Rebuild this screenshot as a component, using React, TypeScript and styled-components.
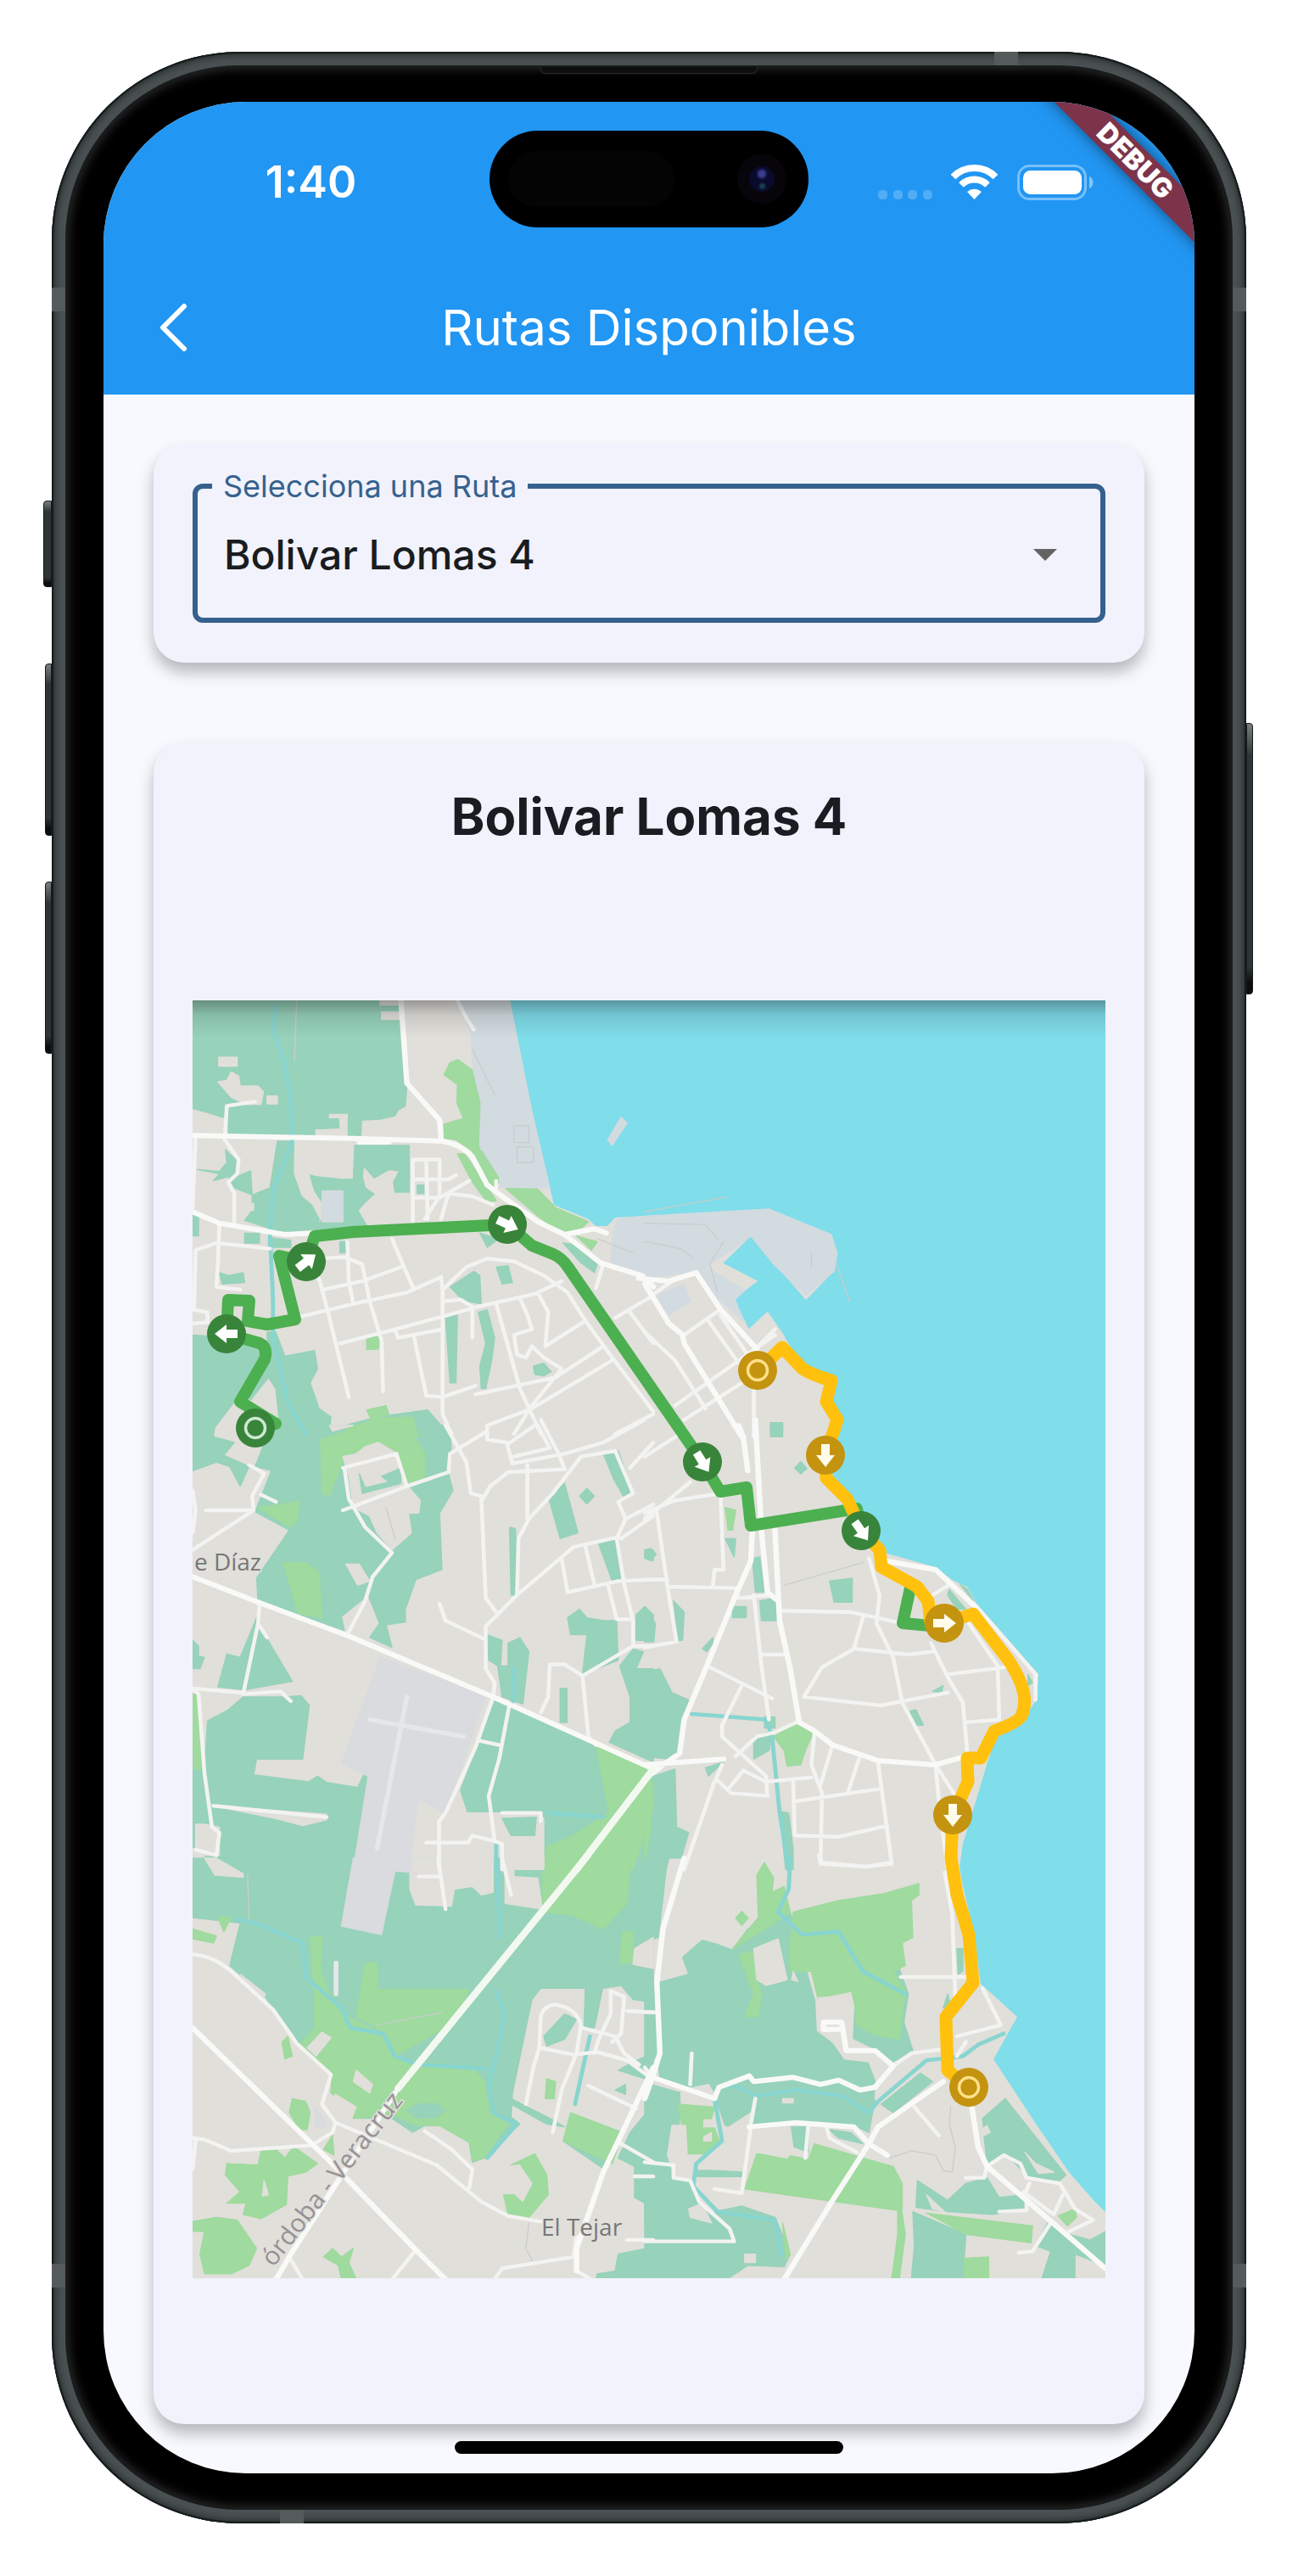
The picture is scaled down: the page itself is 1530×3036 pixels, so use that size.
import React, { useState } from "react";
import styled, { createGlobalStyle } from "styled-components";

const GlobalStyle = createGlobalStyle`
  *, *::before, *::after { box-sizing: border-box; }
  body {
    margin: 0;
    background: #ffffff;
    font-family: Inter, Roboto, "Liberation Sans", sans-serif;
  }
`;

/* ---------- Device ---------- */

const Page = styled.div`
  padding: 61px;
`;

const Device = styled.div`
  position: relative;
  padding: 18px;
  border-radius: 222px;
  background: #3d4344;
  box-shadow: inset 0 0 0 2px #161b1b, inset 0 0 10px 3px #1f2525, inset 0 0 0 16px #4b5152;
`;

const Bezel = styled.div`
  position: relative;
  padding: 41px 43px;
  border-radius: 204px;
  background: #000000;
  box-shadow: 0 0 0 2px #1a1d1d, inset 0 0 14px #3a3a3a;
`;

const Screen = styled.div`
  position: relative;
  overflow: hidden;
  border-radius: 168px;
  background: #f8f9ff;
`;

type Side = "left" | "right";

const SideButton = styled.span<{ $side: Side; $top: number; $height: number; $depth: number }>`
  position: absolute;
  ${(p) => p.$side}: ${(p) => -p.$depth}px;
  top: ${(p) => p.$top}px;
  width: ${(p) => p.$depth}px;
  height: ${(p) => p.$height}px;
  border: 1px solid #161a1a;
  border-radius: ${(p) => (p.$side === "left" ? "4px 0 0 4px" : "0 4px 4px 0")};
  background: linear-gradient(#7a7f80, #2f3536 12%, #2f3536 90%, #0c0e0e 96%);
`;

const SideBand = styled.span<{ $side: Side; $edge: "top" | "bottom" }>`
  position: absolute;
  ${(p) => p.$side}: 0;
  ${(p) => p.$edge}: 278px;
  width: 17px;
  height: 28px;
  background: #555a5b;
`;

const CapBand = styled.span<{ $side: Side; $edge: "top" | "bottom" }>`
  position: absolute;
  ${(p) => p.$side}: 269px;
  ${(p) => p.$edge}: 0;
  width: 28px;
  height: 17px;
  background: #555a5b;
`;

const Speaker = styled.span`
  position: absolute;
  top: 0;
  left: calc(50% - 128px);
  width: 256px;
  height: 8px;
  border: 1px solid #2c2c2c;
  border-top: 0;
  border-radius: 0 0 6px 6px;
  background: #0e0e0e;
`;

/* ---------- Header ---------- */

const Header = styled.header`
  background: #2196f3;
  color: #ffffff;
`;

const StatusBar = styled.div`
  display: grid;
  grid-template-columns: 1fr 376px 1fr;
  align-items: center;
  height: 190px;
`;

const Clock = styled.time`
  padding-left: 34px;
  text-align: center;
  font-size: 52px;
  line-height: 60px;
  font-weight: 600;
`;

const Island = styled.div`
  display: flex;
  align-items: center;
  justify-content: space-between;
  align-self: start;
  height: 114px;
  margin-top: 34px;
  padding: 0 26px 0 22px;
  border-radius: 57px;
  background: #000000;
`;

const IslandSensor = styled.span`
  width: 196px;
  height: 66px;
  border-radius: 33px;
  background: #040404;
`;

const Lens = styled.span`
  width: 58px;
  height: 58px;
  border: 14px solid #07050a;
  border-radius: 50%;
  background: radial-gradient(circle at 50% 30%, #3c3c8c 0 3px, transparent 7px),
    radial-gradient(circle at 52% 78%, #14404a 0 2px, transparent 5px), #0a0a2e;
`;

const StatusIcons = styled.div`
  display: flex;
  align-items: center;
  justify-content: center;
  padding-right: 38px;
`;

const NavBar = styled.div`
  display: grid;
  grid-template-columns: 120px 1fr 120px;
  align-items: center;
  height: 155px;
  padding: 0 22px 4px;
`;

const BackButton = styled.button`
  display: flex;
  align-items: center;
  justify-content: center;
  height: 120px;
  padding: 0;
  border: 0;
  background: none;
  color: inherit;
  cursor: pointer;
`;

const NavTitle = styled.h1`
  margin: 0;
  text-align: center;
  font-size: 58px;
  line-height: 72px;
  font-weight: 400;
`;

const DebugBanner = styled.span`
  position: absolute;
  top: 52px;
  right: -80px;
  width: 300px;
  transform: rotate(45deg);
  background: #7d344b;
  box-shadow: 0 0 18px rgba(0, 0, 0, 0.5);
  color: #ffffff;
  text-align: center;
  font-size: 32px;
  line-height: 36px;
  font-weight: 900;
`;

/* ---------- Body ---------- */

const Body = styled.main`
  display: flex;
  flex-direction: column;
  gap: 94px;
  padding: 58px 59px;
`;

const Card = styled.section`
  border-radius: 36px;
  background: #f1f2fb;
  box-shadow: 0 11px 18px rgba(0, 0, 0, 0.27);
`;

const PickerCard = styled(Card)`
  padding: 30px 46px 47px;
`;

const RouteCard = styled(Card)`
  padding: 51px 46px 172px;
`;

const Outline = styled.fieldset`
  position: relative;
  min-width: 0;
  margin: 0;
  padding: 0 17px 14px;
  border: 6px solid #36618e;
  border-radius: 12px;
`;

const Legend = styled.legend`
  padding: 0 13px;
  color: #36618e;
  font-size: 36px;
  line-height: 40px;
`;

const Picker = styled.select`
  display: block;
  width: 100%;
  height: 121px;
  padding: 0 14px;
  border: 0;
  outline: 0;
  appearance: none;
  background: none;
  color: #191c20;
  font-family: inherit;
  font-size: 48px;
  font-weight: 500;
`;

const PickerArrow = styled.svg`
  position: absolute;
  right: 51px;
  bottom: 67px;
  pointer-events: none;
`;

const RouteTitle = styled.h2`
  margin: 0 0 181px;
  color: #191c20;
  text-align: center;
  font-size: 60px;
  line-height: 72px;
  font-weight: 700;
`;

const MapView = styled.svg`
  display: block;
  width: 100%;
  height: auto;
  font-family: "Open Sans", "Noto Sans", sans-serif;
`;

const HomeIndicator = styled.span`
  position: absolute;
  bottom: 23px;
  left: 50%;
  width: 458px;
  height: 15px;
  transform: translateX(-50%);
  border-radius: 8px;
  background: #000000;
`;

/* ---------- Map data ---------- */

interface Sheet {
  x: number;
  y: number;
  scale: number;
  woods?: string;
  parks?: string;
  land?: string;
  port?: string;
  airport?: string;
  runways?: string;
  woodsTop?: string;
  rivers?: string;
  streets?: string;
  avenues?: string;
  highway?: string;
  faint?: string;
}

const WEST = 0.3508;
const EAST = 0.3571;

const sheets: Sheet[] = [
  {
    x: 220, y: 1170, scale: WEST,
    woods:
      "M20 28H722L740 330L735 400L710 415L700 435L650 447L588 450L585 505H543V440L510 440L512 478L430 482V505H140V440H118L75 425L20 410Z" +
      "M305 525H360L358 640L385 720L420 750L445 800L440 850H330L195 805L220 770V715L280 690Z" +
      "M565 540H748V705H700L695 670L715 630L680 625L630 655L595 612L590 650L600 690L630 712L600 740L575 770L620 850H430L455 800V740L430 700L415 645L435 650L520 660L560 660Z" +
      "M130 555L165 590L170 650L215 630L220 715L160 690L140 650L90 665L110 640L35 625L110 632L135 600Z" +
      "M20 780H40V860H20ZM195 850H245V885H195ZM275 865L350 875V900H275ZM515 880H540V920H515ZM110 990L140 1000L190 990L195 1025L120 1030Z" +
      "M20 1210L90 1215L200 1220L260 1240L270 1300L165 1440L70 1570H20Z" +
      "M270 1200H300L330 1285L430 1265L440 1330L415 1380L445 1470L485 1500L480 1545L640 1500L810 1475L830 1500L890 1570H290L310 1500L300 1400L275 1360L215 1440L200 1420L275 1290Z" +
      "M885 1040L965 985L985 1000L990 1100L930 1090ZM1040 970L1080 965L1095 1025L1060 1030ZM870 1150L910 1140L905 1380H885Z" +
      "M980 1130L1010 1120L1035 1220L1025 1300L1005 1400H990L985 1320L1005 1240ZM1165 1320L1200 1310L1225 1340L1200 1355L1170 1350Z" +
      "M1265 885L1300 890L1380 960L1370 990L1320 950ZM985 850L1050 870L1010 900ZM775 680H797V710H775Z",
    parks:
      "M865 290L885 248L912 236L968 280L990 390L985 555L1030 590L1055 665L1030 690L985 640L960 560L905 520L865 515V465L895 455L930 445L908 390L910 325Z" +
      "M910 570H935L1040 735L1010 740L960 670ZM1070 690H1175L1240 760L1350 810L1330 830L1260 850L1180 790Z" +
      "M605 1220L650 1215L645 1260L605 1262ZM605 1475L670 1460L680 1490L620 1510ZM540 1540L640 1505L760 1500L780 1570H540ZM1310 860L1380 880L1360 910Z",
    land:
      "M108 228H170V260H108ZM105 315L135 310L150 280L175 295L180 330L240 330L258 350L250 395L200 395L150 370ZM270 365H305V393H270ZM650 28H718V44H650ZM655 68H720V94H655ZM480 430H540V442H480ZM170 745H225V770H170Z",
    port: "M905 28H1085L1160 420L1220 690L1055 688L1050 650L985 540L990 390L960 260L955 140ZM455 700H525V810H455ZM1415 520L1460 440L1480 460L1430 540Z",
    rivers: "M300 50L290 130L330 250L350 400L355 530L290 700L280 850L290 1080L290 1220L340 1450L400 1560",
    avenues:
      "M20 505L560 515L860 525Q920 535 960 580L1010 680L1060 720L1180 810L1270 855L1390 955L1530 1000L1568 1040M580 528H680M720 28L740 320L850 450L855 520M20 775L110 815L330 855L420 850M1270 855L1370 835L1410 850",
    streets:
      "M230 385L135 400L128 520L175 590L170 640L140 670L160 710V810M110 820L105 960L100 1040L180 1050M30 910L100 885L280 905M30 910L25 1120M30 510L20 760M20 1120L70 1130V1165L20 1170M910 28L940 90L965 130" +
      "M760 590H850V720L800 800M760 590V810M805 590L810 800M760 660H880L905 645M760 725H850L950 665M855 800L880 710L960 720L1030 750" +
      "M440 940L530 935L590 960L615 1090L655 1230L660 1410M540 880L545 1020L560 1100M690 870L730 970L760 1040M460 1050L590 1020L720 970" +
      "M385 1145L560 1100L740 1060L855 1005L860 1050L860 1430L860 1490L890 1560M445 1010L480 1150L545 1430M515 1240L700 1190L860 1145L980 1110L1170 1065L1260 1020M700 1190L710 1220L860 1190" +
      "M765 1220L805 1425L860 1430L970 1390M860 1050L940 970L1010 940L1100 950L1200 1000L1280 1060L1340 1160L1430 1290L1568 1480M1040 1100L1080 1250L1120 1400L1190 1560M870 1090L920 1085L960 1110V1220" +
      "M1120 1080L1145 1140L1160 1190L1100 1210L1110 1280L1140 1290L1160 1250L1200 1290L1260 1330M1180 1060L1215 1130L1205 1250L1340 1160M1400 960L1375 1045M970 1420L1240 1360L1400 1250" +
      "M1430 1300L1160 1470L1010 1530V1560M1260 1330L1160 1460L1100 1560M1530 1000L1568 1080M1490 1130L1568 1240M1440 1150L1568 1070M1440 1560L1568 1490M1040 665V700",
    faint: "M370 28L362 240M960 200L1035 360M1100 470H1150V530H1100ZM1110 545H1165V600H1110ZM1380 870L1500 920",
  },
  {
    x: 760, y: 1170, scale: EAST,
    woods: "M415 1520H455V1570H415Z",
    port:
      "M-107 870L-90 800L0 790L410 765L615 855L635 920L625 985L532 1070L430 965L350 860L300 900L200 970L330 1050L298 1085L325 1160L240 1080L170 985L0 1010L-110 960Z" +
      "M40 1070L130 1030L150 1090L80 1140Z",
    land: "M258 958L370 1020L340 1040L240 990ZM345 1190L405 1130L460 1215L430 1250Z",
    avenues: "M0 1030L80 1170L125 1210L130 1240L320 1570M-20 1010L80 1020L170 990L250 1120L370 1260",
    streets:
      "M360 1400V1570M30 1065L90 1020M130 1210L250 1120M100 1460L430 1210M130 1510L320 1380M0 1200L100 1300L200 1470M210 1160L310 1310M250 1140L340 1280M365 1260L430 1190",
    faint: "M0 775L270 722M630 950L675 1090M260 880L215 960L240 1060M0 880L120 905L160 940M0 815L200 820L240 870M550 920V970",
  },
  {
    x: 220, y: 1680, scale: WEST,
    woods:
      "M20 0H95L90 40L160 60L125 105L210 145L180 215L145 145L100 130L20 160Z" +
      "M250 0H885L890 110L880 170L895 230L850 310L858 510L770 545L735 650V695L670 705L690 785L615 750L648 700L610 600L520 675L530 725L240 625L235 540L345 370L230 305L285 160L230 145L255 80Z" +
      "M1215 250L1270 205L1315 380L1255 400ZM1320 250L1345 222L1370 250L1345 278ZM1400 100L1450 90L1500 240L1470 255L1435 190ZM1085 360L1105 365L1115 600H1090ZM1385 420L1440 400L1460 545L1430 550ZM1540 440H1568V480Z" +
      "M1010 740L1060 760L1055 850H1080V770L1120 750L1150 800L1130 985L1060 960L1045 850L1015 830Z" +
      "M1280 680L1320 650L1345 680L1400 690L1445 690L1450 830L1330 880L1345 740L1290 740ZM1510 670L1540 640L1568 670V760H1510Z" +
      "M1455 850L1500 790L1535 800L1510 860H1568V1190L1420 1120L1440 1080L1490 1050V960ZM1255 930H1278V1050H1255Z" +
      "M20 760L40 780V815L60 820L45 860H20ZM235 680L180 820L135 808L105 925L195 935L355 905L260 735Z" +
      "M70 1045L140 1005L190 960H330L385 955L412 990L390 1180H235L225 1235L410 1260L440 1240L470 1262L575 1280L595 1235L615 1245L560 1570H120L20 1490V1215H60Z" +
      "M1040 960L1090 985L1568 1210V1570H1200V1390L1180 1370H945L920 1290L985 1115Z",
    parks:
      "M450 50L590 0H740L800 100L800 190L740 210L700 100L640 60L600 80L530 110L480 250L455 240ZM240 290L380 270L370 340L345 360ZM325 485H400L445 520L455 680L375 665Z" +
      "M20 950H38L60 1215H20ZM1375 1130L1560 1210L1568 1350L1500 1570H1200L1210 1490L1300 1450L1420 1370Z",
    land:
      "M525 110L570 100L600 75L645 60L700 95L740 210L785 265L780 310L745 310L755 380L690 440L640 380L615 320L560 290L545 180ZM535 490H580L615 550L575 565ZM480 0H560L490 20Z" +
      "M90 1345L470 1375V1395L390 1415L300 1390ZM945 1370H1180L1200 1390V1570H1060V1480H1020V1570H845V1400ZM60 1410L110 1420V1520H30V1410Z",
    airport: "M650 820L1005 955L870 1370L780 1320L745 1570H560L610 1240L520 1195Z",
    runways: "M740 960L640 1495M615 1040L930 1100",
    woodsTop: "M580 170L590 240L720 205V150L655 180L680 200L600 220ZM1060 1390L1175 1385L1170 1450H1090Z",
    rivers: "M1100 860L1095 980M1210 1370L1400 1385M1040 1485V1570",
    avenues: "M20 535L240 625L545 745L1030 960L1568 1215",
    highway: "M1568 1215L1310 1570",
    streets:
      "M525 300L740 215L880 165L885 100L1010 20M525 150L705 100L740 215M530 150L545 260L600 360L690 450L625 535L600 620L540 740M20 440L225 300L220 250L260 170L210 140M65 300H225M250 245L300 270" +
      "M245 630L240 700L190 950L315 940L350 975M20 930L190 945M240 700L270 750M20 930L40 950L60 1230L85 1420L110 1440L100 1520L30 1500M90 1345L470 1385M20 230L30 300L20 380" +
      "M870 0L940 130L955 240L990 250L1005 610L1040 660M1010 20V50L1075 60L1095 135L1270 100L1400 60L1540 -20M1100 110L1220 80L1180 0M1080 65L1170 0M1190 -20L1250 100L1270 155L1080 165L1020 215L990 270M1145 140V330M1568 60L1490 150" +
      "M1110 600L1115 400L1150 330L1230 240L1325 110L1440 90L1500 240L1450 270L1475 330L1445 400L1470 560L1500 690V780L1330 885L1270 845H1220L1215 960L1190 1015M1330 885L1350 1100L1375 1130M1475 330L1568 280M1460 400L1568 320" +
      "M1450 395L1300 430L1110 600L1005 710V860L1035 910L1030 960L970 1140L870 1370L848 1400V1570M1260 470L1280 590L1450 550L1568 545M1340 430L1370 560M1415 560L1445 685H1490M1500 780H1568M850 630L870 690L1000 755" +
      "M1085 985L1050 1180L1015 1310L1035 1470M985 1115L1050 1130M805 1475H945L960 1450L1035 1470L1060 1480V1570M1060 1370H1190V1400",
    faint: "M670 290L700 400",
  },
  {
    x: 760, y: 1680, scale: EAST,
    woods:
      "M0 870L50 860L90 945L145 970L120 1150L80 1180L0 1170ZM0 1250L100 1215L105 1420L145 1440L120 1530H80L70 1570H0ZM0 440L20 435L38 455L20 478L0 470ZM0 640L35 700L30 765H0ZM95 620L130 660L125 760H110ZM190 790L225 750V770L205 800Z" +
      "M610 550L685 540V625H625ZM380 620L435 610V690L385 690ZM355 470L380 465L395 590L365 590ZM265 400H300L295 465ZM290 640H335V680H290ZM360 1100L420 1080L410 1150L360 1180Z" +
      "M875 1010L895 1005L920 1060H895ZM445 1365L475 1370L490 1500V1570H465ZM1005 580L1060 650H1030L1000 600ZM495 150L515 128L535 152L515 172ZM415 0H455V25H415ZM950 940L985 920L980 945ZM395 1030H430V1070H395ZM200 1210L260 1190L210 1240ZM1040 560L1065 580L1085 620ZM1265 880L1280 910L1265 920Z",
    parks: "M0 1280L25 1260L20 1430L0 1540ZM265 290L300 300L290 370H275ZM425 1100L500 1050L555 1090L530 1150L515 1200L470 1205L460 1150Z",
    rivers: "M155 1020L400 1040L420 1100L445 1365L475 1570",
    avenues:
      "M0 1250L60 1200L115 1160L130 1040L205 850L300 600L350 480L355 380M365 -20L385 370L405 590L440 620M340 160L325 40L310 0M430 370L445 690L480 860L510 1050L560 1080L620 1130L770 1185L960 1200L1060 1170M0 1200L260 1180M800 480L960 510L1090 640",
    streets:
      "M0 330L60 280L150 200M0 310L100 265L250 240L260 510H230L225 570M40 310L75 570L300 575L310 610L410 600M75 570L105 765L0 785M0 545H75M360 600L385 850L410 1040M205 850L420 965M320 920L255 1060V1100L400 1240L405 1310L285 1300L235 1250L255 1200" +
      "M280 1280L325 1220L400 1260L550 1245M300 1170L370 1100L430 1085L510 1045M380 810H465M450 655L680 660L830 695M720 680L690 790L585 855L525 960L780 990L1000 945M700 790L870 810L950 800M740 470L775 600L765 700L820 820L850 980L960 1200L1020 1300" +
      "M945 770L1000 890L1050 980L1065 1160M1000 880L1190 855M1070 700L1165 850L1170 1040L1060 1050M1010 560L950 600M560 1090L550 1200L585 1300L580 1550L730 1560L815 1550L770 1190M620 1130L580 1270M710 1170L670 1300" +
      "M490 1250L495 1450L640 1455L800 1415M490 1330L775 1285M960 1200L970 1320L1000 1570M230 1260L130 1570M0 110L130 20M1095 640L1290 880V970",
    faint: "M460 565L720 485",
  },
  {
    x: 220, y: 2190, scale: WEST,
    woods:
      "M20 0H1568V510L1500 500L1460 450L1400 460H1190L1160 500L1095 830L1090 915L1120 940L1000 1060L960 1075L950 1005L850 945H800L760 970L690 920L560 920V880L485 830L490 760L370 650L290 540L265 490L145 380L180 230L20 210Z" +
      "M1200 630L1270 550L1310 570L1270 640L1210 665ZM1340 450H1400L1370 600H1335ZM1450 750L1500 720L1568 690V790ZM1440 820L1475 800V835ZM1090 850L1220 920L1270 950L1210 940L1090 870ZM1490 970L1568 870V1390L1540 1300V1220L1505 1200V1090L1450 1060Z" +
      "M1380 1470L1440 1460L1450 1400L1568 1375V1490H1375ZM1265 1000L1410 1105L1430 1050Z",
    parks:
      "M1200 0H1490L1480 160L1400 250L1290 200L1190 190ZM415 280L455 275L450 400L480 480L540 560L640 610L700 700L780 720L960 740L1000 790L1020 900L1080 940L1000 1060L960 1070L950 1005L850 945H770L700 910L560 920V880L485 830L490 760L380 660L430 600V480Z" +
      "M600 370H640V465H950L900 580L700 700L640 600L570 560ZM1465 260H1500V370H1455ZM20 250L100 275L90 300L20 285ZM105 210H150L125 260Z" +
      "M355 850L400 860L415 900L405 960L380 960L345 900ZM135 1080L240 1085L250 1035L300 1030L330 1060L360 1020L440 1080L400 1110L340 1125L335 1225L250 1275L190 1260L200 1220L135 1220L180 1180L130 1120Z" +
      "M20 1285L100 1270L170 1280L235 1380L210 1440L150 1470H60L45 1400L60 1320H20ZM460 1410L490 1380L520 1410L560 1380L545 1430L570 1490H520L510 1440ZM460 1030L490 980L495 1050ZM320 650L340 630L355 700L330 710Z" +
      "M1090 1085L1170 1045L1210 1120L1215 1190L1150 1270L1080 1260L1065 1190H1100L1130 1220L1165 1150L1120 1080ZM1290 900L1465 970L1430 1080L1265 1000ZM1210 780L1240 790L1235 850L1205 850Z",
    land:
      "M60 0H100L190 55V68L95 60ZM750 0H1030V120L990 130L960 100L900 110L890 170L770 165L750 110ZM1070 0H1200V30L1100 40V65L1180 70L1195 180L1070 160ZM1505 320L1568 280V390L1500 375Z" +
      "M570 750L625 800L615 830L560 790ZM455 615L485 635L435 700L405 670ZM500 835L570 880L550 930L480 900ZM180 410L265 480L255 500ZM260 1140L275 1190L255 1195Z",
    airport: "M560 0H760L750 50L700 45L655 270L520 240ZM430 880L470 930L460 955L430 950Z",
    woodsTop: "M740 890L780 868L840 868L870 890L840 915L770 920Z",
    rivers:
      "M1040 0L1055 280M170 215L260 240L390 300L400 420L520 530L550 600L660 620L700 700L780 730L1010 745M1040 470L1070 550L1040 700L1015 800L1030 900L1110 940L1010 1060M1355 630L1305 870",
    avenues: "M20 600L470 1060L770 1385L870 1490M700 830L350 1400L300 1490M1310 1460V1380L1350 1260L1400 1110L1568 740",
    highway: "M1348 -10L710 815",
    streets:
      "M20 340Q90 345 150 400L290 535L370 655L485 765L455 870L500 935L840 1085L990 1215L1080 1265L1190 1285M20 990L60 995L150 1035L420 1015L490 970L500 935M30 1000L20 1100M770 1385L690 1490M350 1420L390 1490M800 965L890 1030L960 1100L950 1165" +
      "M1035 1490L1060 1450L1300 1410L1310 1340M1190 560Q1200 520 1240 518Q1310 530 1325 590L1310 690L1260 820L1230 970M1190 560L1185 670L1300 695L1380 685L1480 715L1550 770M1185 670L1165 740L1140 870M1330 600L1440 630L1470 690L1520 730" +
      "M1425 470V550L1385 640L1370 690M1425 470L1470 490L1460 620L1430 650M1480 540L1568 545M1350 805L1510 885M1460 1010L1568 1075M845 0L870 180M780 65H855M1060 0L1090 130M1310 1460L1360 1490M1480 1350H1568M1505 1125H1568",
    faint: "M205 60L210 220M640 590L860 545M1150 1290L1140 1380L1165 1430",
    runways: "M502 370V480",
  },
  {
    x: 760, y: 2190, scale: EAST,
    woods:
      "M0 0H75L45 280L0 300ZM0 400L30 440L40 690L0 780Z" +
      "M45 440L145 410L125 350L190 290L240 305L290 325L340 250L480 190L560 500L700 480L840 390L870 480L855 580L885 680L820 720L760 680L680 690L780 750L760 850L740 970L690 945L600 940H350L310 960L265 945L235 850L50 790L40 640Z" +
      "M0 800H20L120 830L110 1000L100 1090L150 1140L180 1220L290 1310L300 1365H0ZM0 1365H300L280 1310L230 1250L320 1230L430 1270L480 1400L460 1445L340 1440L270 1490H0Z" +
      "M165 1100L320 1110V1130L170 1125ZM480 950H540V1040L490 1020ZM610 960L680 970L720 1010L640 990Z" +
      "M885 1250L1060 1330L1050 1490H880L890 1370ZM900 1140L1000 1210L1060 1150L1130 1130L1170 1200L1250 1190L1260 1240L1150 1260L1000 1250L895 1235Z" +
      "M1115 920L1190 850L1390 1120L1370 1140L1270 1130L1190 1045L1130 1090ZM1330 1290L1400 1330L1470 1350L1520 1320V1440L1420 1400V1490H1310L1340 1390L1290 1370ZM1030 320H1050V400L1035 410ZM1000 480L1010 520L985 530Z",
    parks:
      "M490 190L640 150L790 125L905 90V130L880 150L885 280L850 300L860 380L820 400L860 470L840 640L760 625L700 590L690 480L570 490L550 400L480 400V300ZM370 60L395 15L425 70L420 120L460 100L480 190L400 250L290 320L375 210ZM300 212L320 188L342 212L320 238Z" +
      "M310 340L360 330L370 430L385 480L375 560H330L360 480ZM110 870L230 880L220 920L245 1000L200 1050H140ZM370 1045L470 1050L540 1065L560 1010L720 1060L820 1090L850 1150V1240L830 1245L330 1170Z" +
      "M835 1150L860 1330L840 1490H815L835 1330ZM930 1255L1280 1300L1275 1360L1060 1330ZM1055 1415L1135 1410V1490H1055ZM1365 1265L1420 1240L1425 1270L1395 1300ZM455 1290L480 1400L465 1420Z",
    land:
      "M565 500L680 475L690 520L685 640L760 680L830 740L800 800L760 850L765 790L740 720L660 710L620 650L570 610ZM360 320L440 285L470 430L400 450L370 430ZM195 925H235V950H195ZM195 985L220 970V1000H195ZM1255 1040L1290 1080L1350 1110L1300 1115Z" +
      "M120 820L210 800L240 850L170 850L165 865H120ZM90 945H135L140 1050H210L165 1080L150 1140L100 1130L75 1050ZM265 960L350 900L340 1100H170L245 1040ZM380 950L480 950L490 1030L470 1060L370 1040ZM220 1130H320V1190H220ZM760 880L800 870L830 900L790 930L750 960ZM330 1400H365V1430H330ZM1110 960L1130 945L1140 970L1120 980ZM930 1190L990 1250L950 1240ZM490 400L505 435L485 430ZM455 850H490V865H455ZM145 1240L190 1220L220 1290L150 1270Z",
    woodsTop: "M780 870L910 760L950 790L820 900Z",
    rivers:
      "M480 0L475 110L440 190L520 270L640 260L720 400L860 480M230 850L255 1000L170 1080L160 1160L240 1250L430 1280L450 1400M1185 620L1100 660L1050 700L930 715L770 860L740 900L650 840L500 820L370 840L280 800",
    avenues:
      "M130 0L60 250L40 440L50 690L25 775L0 850M25 775L230 850L245 810L345 770L360 790L490 775L580 800L640 785L710 820L760 810L820 735L760 680H665L650 580H590V605H650M985 790L770 950L740 1010L620 1210L460 1490M1080 880L1100 1020L1130 1090L1250 1200L1520 1450M345 950L500 935L690 950L740 1010L800 1050",
    streets:
      "M0 740L25 775M0 545H40M820 735L880 690L990 675M155 690L150 800M350 950L320 1185L230 1170M600 950L610 990L700 1040M540 940L530 1060M890 880L970 980M1130 1090L1185 1050L1240 1080L1260 1130L1370 1150L1420 1240L1480 1280L1400 1320" +
      "M1060 1130H1120L1130 1090M1250 1200L1270 1150M1260 1200V1245L1170 1250M1340 1290L1280 1390L1235 1395M1250 1180L1350 1260L1380 1190M0 1075L95 1085V1130L150 1140L180 1215L280 1310L295 1355H0" +
      "M990 50L1015 200L1025 490M845 420H1060M1115 460L1175 590L1030 630M1060 650L1030 700M365 850L350 940M575 -10L580 15L730 30L815 15",
    faint: "M1010 880L1005 940L1025 1020L1015 1110L985 1105L960 1050L880 1035L810 1060",
  },
];

const sea =
  "M600 1179L627 1310L653 1420L694 1437L702 1445L716 1445L725 1435L760 1433L906 1425L980 1455L987 1477L983 1498L950 1532L885 1457L852 1489L892 1510L866 1532L883 1567L905 1547L924 1575L939 1598L960 1615L985 1625L978 1653L992 1673L984 1700L975 1720L983 1743L1012 1777L1042 1830L1103 1847L1122 1862L1140 1870L1151 1890L1189 1933L1224 1973L1222 2003L1203 2030L1174 2047L1164 2077L1149 2127L1135 2173L1131 2200L1135 2223L1147 2273L1156 2338L1199 2377L1171 2427L1221 2503L1260 2560L1289 2593L1303 2607V1179Z";

const outboundRoute =
  "M300 1682L325 1678L283 1652L312 1602Q316 1588 306 1583L267 1572L269 1532L294 1533L292 1557L315 1561L348 1555L329 1480L361 1487L371 1457L416 1452L598 1443L627 1468L652 1478Q663 1483 670 1494L828 1723L849 1758L880 1753L885 1798L1010 1778L1015 1805M1074 1867L1064 1913L1096 1916";

const returnRoute =
  "M894 1615L922 1588L946 1613Q956 1620 980 1627L974 1652L987 1673L983 1686L972 1715L974 1742L999 1767L1015 1803L1037 1827L1039 1847L1081 1870L1094 1887L1097 1912L1114 1913L1147 1902L1189 1957Q1216 1998 1204 2022Q1200 2030 1172 2040L1156 2072L1140 2072L1141 2100L1123 2140L1121 2190L1128 2233L1142 2280L1147 2337L1115 2377L1117 2440L1142 2460";

interface Stop {
  x: number;
  y: number;
  line: "out" | "back";
  angle?: number;
}

const stops: Stop[] = [
  { x: 301, y: 1683, line: "out" },
  { x: 267, y: 1572, line: "out", angle: 180 },
  { x: 361, y: 1487, line: "out", angle: -38 },
  { x: 598, y: 1443, line: "out", angle: 25 },
  { x: 828, y: 1723, line: "out", angle: 58 },
  { x: 1015, y: 1804, line: "out", angle: 55 },
  { x: 893, y: 1615, line: "back" },
  { x: 973, y: 1715, line: "back", angle: 90 },
  { x: 1113, y: 1913, line: "back", angle: 0 },
  { x: 1123, y: 2139, line: "back", angle: 90 },
  { x: 1142, y: 2460, line: "back" },
];

const stopColors = {
  out: { disc: "#38843a", ring: "#cfe8cf", arrow: "#ffffff" },
  back: { disc: "#c4930f", ring: "#ffe08a", arrow: "#fffbea" },
};

type Layer = keyof Omit<Sheet, "x" | "y" | "scale">;

const layers: { key: Layer; fill?: string; stroke?: string; width?: number }[] = [
  { key: "woods", fill: "#97d2ba" },
  { key: "parks", fill: "#9fda9e" },
  { key: "land", fill: "#e1dfda" },
  { key: "port", fill: "#d2dbe0" },
  { key: "airport", fill: "#d9dbdf" },
  { key: "runways", stroke: "#e6e7e8", width: 16 },
  { key: "woodsTop", fill: "#97d2ba" },
  { key: "rivers", stroke: "#88d5d0", width: 14 },
  { key: "faint", stroke: "#c9cdcc", width: 4 },
  { key: "streets", stroke: "#f3f3f1", width: 13 },
  { key: "avenues", stroke: "#f9faf7", width: 18 },
  { key: "highway", stroke: "#f3f9f1", width: 24 },
];

function StopMarker({ stop }: { stop: Stop }) {
  const colors = stopColors[stop.line];
  return (
    <g transform={`translate(${stop.x} ${stop.y})`}>
      <circle r="23" fill={colors.disc} />
      {stop.angle === undefined ? (
        <circle r="11.5" fill="none" stroke={colors.ring} strokeWidth="3.5" />
      ) : (
        <path d="M-13 -5H0V-11L14 0L0 11V5H-13Z" transform={`rotate(${stop.angle})`} fill={colors.arrow} />
      )}
    </g>
  );
}

function RouteMap() {
  return (
    <MapView viewBox="227 1179 1076 1506" role="img" aria-label="Mapa de la ruta">
      <defs>
        <linearGradient id="map-shade" x1="0" y1="0" x2="0" y2="1">
          <stop offset="0" stopColor="#000" stopOpacity="0.32" />
          <stop offset="0.4" stopColor="#000" stopOpacity="0.1" />
          <stop offset="1" stopColor="#000" stopOpacity="0" />
        </linearGradient>
      </defs>
      <rect x="227" y="1179" width="1076" height="1506" fill="#e1dfda" />
      <path d={sea} fill="#80ddea" />
      {layers.map((layer) => (
        <g
          key={layer.key}
          fill={layer.fill ?? "none"}
          stroke={layer.stroke ?? layer.fill}
          strokeWidth={layer.width ?? 4}
          strokeLinejoin="round"
          strokeLinecap="round"
        >
          {sheets.map((sheet) =>
            sheet[layer.key] ? (
              <path
                key={`${sheet.x}-${sheet.y}`}
                d={sheet[layer.key]}
                transform={`translate(${sheet.x} ${sheet.y}) scale(${sheet.scale} 0.3333)`}
              />
            ) : null
          )}
        </g>
      ))}
      <g fill="none" strokeLinejoin="round">
        <path d={outboundRoute} stroke="#4caf50" strokeWidth="14" />
        <path d={returnRoute} stroke="#ffc10e" strokeWidth="15" />
      </g>
      {stops.map((stop) => (
        <StopMarker key={`${stop.x}-${stop.y}`} stop={stop} />
      ))}
      <g fill="#777777" fontSize="28" stroke="#e1dfda" strokeWidth="3" paintOrder="stroke">
        <text x="308" y="1851" textAnchor="end">e Díaz</text>
        <text x="638" y="2635" fontWeight="500">El Tejar</text>
        <text transform="translate(476 2476) rotate(-52)" textAnchor="end" fontSize="30" fill="#969194">
          órdoba - Veracruz
        </text>
      </g>
      <rect x="227" y="1179" width="1076" height="44" fill="url(#map-shade)" />
    </MapView>
  );
}

/* ---------- Icons ---------- */

function StatusGlyphs() {
  return (
    <svg width="254" height="44" viewBox="0 0 254 44" aria-hidden="true">
      <g fill="#ffffff" fillOpacity="0.22">
        {[0, 18, 35, 53].map((x) => (
          <rect key={x} x={x} y="31" width="11" height="11" rx="4.5" />
        ))}
      </g>
      <g fill="none" stroke="#ffffff" strokeWidth="8">
        <path d="M88.500 15.500A35 35 0 0 1 138.500 15.500" />
        <path d="M98 25A22 22 0 0 1 129 25" />
      </g>
      <path d="M113.500 42L105 33Q113.500 26.500 122 33Z" fill="#ffffff" />
      <rect x="165.500" y="2.500" width="79" height="39" rx="13" fill="none" stroke="#ffffff" strokeOpacity="0.4" strokeWidth="3" />
      <rect x="171" y="8" width="69" height="28" rx="8.500" fill="#ffffff" />
      <path d="M249 15C255 17 255 27 249 29Z" fill="#ffffff" fillOpacity="0.45" />
    </svg>
  );
}

function BackChevron() {
  return (
    <svg width="34" height="58" viewBox="0 0 34 58" fill="none" aria-hidden="true">
      <path d="M30 4L5 29L30 54" stroke="#ffffff" strokeWidth="6" strokeLinecap="round" strokeLinejoin="round" />
    </svg>
  );
}

/* ---------- App ---------- */

const routes = ["Bolivar Lomas 4"];

export default function App() {
  const [route, setRoute] = useState(routes[0]);

  return (
    <Page>
      <GlobalStyle />
      <Device>
        <SideButton $side="left" $top={529} $height={102} $depth={10} />
        <SideButton $side="left" $top={721} $height={203} $depth={8} />
        <SideButton $side="left" $top={978} $height={203} $depth={8} />
        <SideButton $side="right" $top={791} $height={320} $depth={8} />
        <SideBand $side="left" $edge="top" />
        <SideBand $side="right" $edge="top" />
        <SideBand $side="left" $edge="bottom" />
        <SideBand $side="right" $edge="bottom" />
        <CapBand $side="right" $edge="top" />
        <CapBand $side="left" $edge="bottom" />
        <Bezel>
          <Speaker />
          <Screen>
            <Header>
              <StatusBar>
                <Clock>1:40</Clock>
                <Island>
                  <IslandSensor />
                  <Lens />
                </Island>
                <StatusIcons>
                  <StatusGlyphs />
                </StatusIcons>
              </StatusBar>
              <NavBar>
                <BackButton type="button" aria-label="Volver">
                  <BackChevron />
                </BackButton>
                <NavTitle>Rutas Disponibles</NavTitle>
              </NavBar>
            </Header>
            <Body>
              <PickerCard>
                <Outline>
                  <Legend>
                    <label htmlFor="route">Selecciona una Ruta</label>
                  </Legend>
                  <Picker id="route" value={route} onChange={(e) => setRoute(e.target.value)}>
                    {routes.map((name) => (
                      <option key={name}>{name}</option>
                    ))}
                  </Picker>
                  <PickerArrow width="28" height="14" viewBox="0 0 28 14" aria-hidden="true">
                    <path d="M0 0H28L14 14Z" fill="#636363" />
                  </PickerArrow>
                </Outline>
              </PickerCard>
              <RouteCard>
                <RouteTitle>{route}</RouteTitle>
                <RouteMap />
              </RouteCard>
            </Body>
            <DebugBanner>DEBUG</DebugBanner>
            <HomeIndicator />
          </Screen>
        </Bezel>
      </Device>
    </Page>
  );
}
